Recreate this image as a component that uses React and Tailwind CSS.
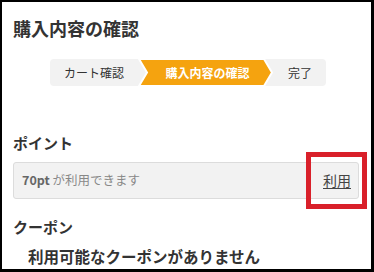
import React from "react";

export default function App() {
  const font = { fontFamily: '"Noto Sans CJK JP", "Noto Sans", sans-serif' };
  return (
    <div
      className="relative box-border w-[374px] h-[272px] overflow-hidden bg-white border-l-2 border-t-2 border-r-[3px] border-b-[3px] border-black pl-[11px] text-[#333]"
      style={font}
    >
      <h1 className="pt-[14px] text-[18px] leading-[24px] font-bold">購入内容の確認</h1>

      <div className="mt-[19px] ml-[37px] flex h-[27px] w-[276px] rounded-sm bg-[#f2f2f2] text-[12px] leading-none">
        <div className="flex w-[88px] items-center justify-center">カート確認</div>
        <div className="relative flex w-[136px] items-center justify-center">
          <svg className="absolute inset-0" width="136" height="27" viewBox="0 0 136 27">
            <polygon
              points="1,0 126,0 134,13.5 126,27 1,27 9,13.5"
              fill="#f5a30f"
              stroke="#ffffff"
              strokeWidth="2"
              strokeLinejoin="miter"
            />
          </svg>
          <span className="relative pl-[3px] font-bold text-white">購入内容の確認</span>
        </div>
        <div className="flex flex-1 items-center justify-center">完了</div>
      </div>

      <h2 className="mt-[47px] text-[15px] leading-[20px] font-bold">ポイント</h2>

      <div className="mt-[9px] flex h-[37px] w-[346px] items-center justify-between rounded-[3px] border border-[#dcdcdc] bg-[#f2f2f2] pl-[8px] pr-[7px]">
        <span className="text-[12.5px] text-[#888]">
          <span className="font-bold text-[#666]">70pt</span> が利用できます
        </span>
        <span className="text-[14px] text-[#444] underline underline-offset-2">利用</span>
      </div>

      <h2 className="mt-[18px] text-[15px] leading-[20px] font-bold">クーポン</h2>
      <p className="mt-[9px] ml-[15px] text-[15.5px] leading-[20px] font-bold">利用可能なクーポンがありません</p>

      <div className="absolute left-[304px] top-[150px] h-[57px] w-[61px] border-[5px] border-[#d9202a]"></div>
    </div>
  );
}
